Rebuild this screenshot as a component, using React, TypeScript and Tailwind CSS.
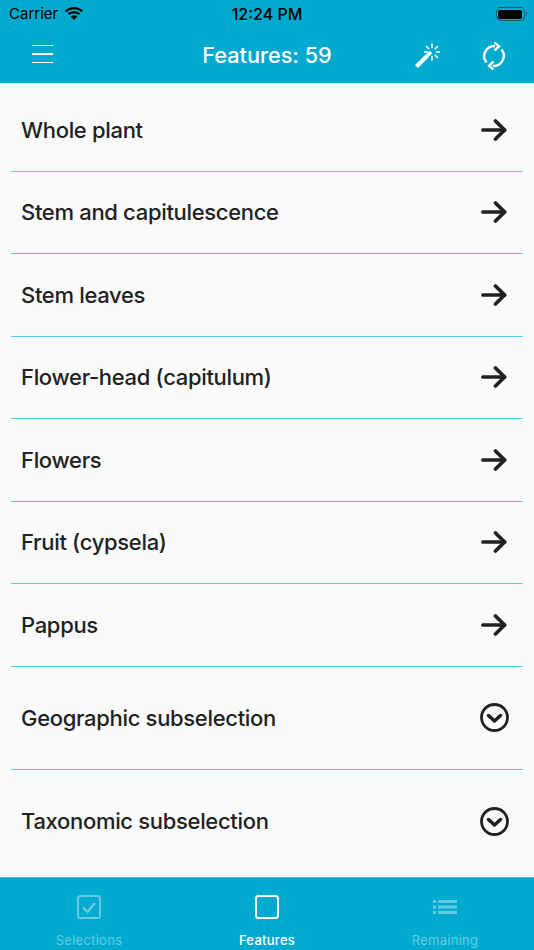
import React from 'react';

const features = [
  'Whole plant',
  'Stem and capitulescence',
  'Stem leaves',
  'Flower-head (capitulum)',
  'Flowers',
  'Fruit (cypsela)',
  'Pappus',
];

const subselections = ['Geographic subselection', 'Taxonomic subselection'];

function Wifi() {
  return (
    <svg width="20" height="15" viewBox="0 0 20 15" fill="currentColor">
      <path d="M10 2.2c2.9 0 5.5 1.1 7.5 3L19 3.600C16.600 1.300 13.400 0 10 0S3.400 1.300 1 3.600l1.500 1.600c2-1.900 4.600-3 7.500-3z" />
      <path d="M10 6.300c1.800 0 3.400.7 4.600 1.800l1.500-1.600C14.500 5 12.300 4.100 10 4.100S5.500 5 3.900 6.500l1.500 1.600c1.200-1.100 2.800-1.800 4.600-1.800z" />
      <path d="M10 8.300c-1.200 0-2.300.5-3.200 1.200L10 13l3.200-3.500c-.9-.7-2-1.200-3.200-1.200z" />
    </svg>
  );
}

function Battery() {
  return (
    <div className="flex items-center gap-px">
      <div className="w-[29px] h-[14px] rounded-[4px] border border-[#00000066] p-[1.5px]">
        <div className="w-full h-full rounded-[2px] bg-black" />
      </div>
      <div className="w-[1.5px] h-[4px] bg-[#00000066] rounded-r-sm" />
    </div>
  );
}

function StatusBar() {
  return (
    <div className="h-[28px] flex items-center justify-between pl-[9px] pr-[7px] text-black text-[15px] relative">
      <div className="flex items-center gap-[6px]">
        <span>Carrier</span>
        <Wifi />
      </div>
      <span className="absolute left-0 right-0 text-center text-[16px] font-medium">12:24 PM</span>
      <Battery />
    </div>
  );
}

function WandIcon() {
  return (
    <svg width="26" height="26" viewBox="0 0 26 26" fill="none" stroke="currentColor" strokeWidth="1.6" strokeLinecap="round">
      <path d="M2.500 23.500L13.500 12.500" strokeWidth="4" strokeLinecap="butt" />
      <path d="M13.500 12.500l3.500-3.500" strokeWidth="3.500" strokeLinecap="butt" />
      <path d="M18 1v3.500M18 13.500V17M22.500 9H26M10.500 9H13.500M12.500 3.500l2.200 2.200M23.500 3.500l-2.200 2.200M21.300 12.300l2.200 2.200" />
    </svg>
  );
}

function SyncIcon() {
  return (
    <svg width="28" height="28" viewBox="0 0 28 28" fill="none" stroke="currentColor" strokeWidth="2.4">
      <path d="M6.500 20.500A10 10 0 0 1 15 4.200" />
      <path d="M21.500 7.500A10 10 0 0 1 13 23.800" />
      <path d="M14.500 0.500L19 4.200L14.500 8.500" strokeLinejoin="miter" />
      <path d="M13.500 19.500L9 23.800L13.500 27.500" strokeLinejoin="miter" />
    </svg>
  );
}

function ArrowIcon() {
  return (
    <svg width="26" height="22" viewBox="0 0 26 22" fill="none" stroke="#212121" strokeWidth="3.7" strokeLinecap="round" strokeLinejoin="round">
      <path d="M1.900 11H23.600" />
      <path d="M14.500 2L23.600 11L14.500 20" />
    </svg>
  );
}

function ChevronCircleIcon() {
  return (
    <svg width="29" height="29" viewBox="0 0 29 29" fill="none" stroke="#212121">
      <circle cx="14.5" cy="14.5" r="13" strokeWidth="2.800" />
      <path d="M8.500 12.500l6 5.500 6-5.500" strokeWidth="3.400" strokeLinecap="round" strokeLinejoin="round" />
    </svg>
  );
}

function Header() {
  return (
    <div className="h-[55px] flex items-center justify-between text-white">
      <div className="w-[146px] pl-[32px]">
        <div className="w-[21px] flex flex-col gap-[7px] mb-[3px]">
          <div className="h-[1.25px] bg-white" />
          <div className="h-[1.25px] bg-white" />
          <div className="h-[1.25px] bg-white" />
        </div>
      </div>
      <h1 className="text-[21.7px] font-medium leading-none">Features: 59</h1>
      <div className="w-[146px] flex items-center justify-between pl-[26px] pr-[26px]">
        <WandIcon />
        <SyncIcon />
      </div>
    </div>
  );
}

function Row({ label, tall, last, children }: { label: string; tall?: boolean; last?: boolean; children: React.ReactNode }) {
  return (
    <div className="px-[11px]">
      <div
        className={`flex items-center justify-between pl-[10px] ${last ? '' : 'border-b border-[#55cbe6]'} ${
          tall ? 'h-[103px] pr-[14px]' : 'h-[82.5px] pr-[16px]'
        }`}
      >
        <span className="pt-px text-[22px] font-medium text-[#212121] tracking-[-0.32px]">{label}</span>
        {children}
      </div>
    </div>
  );
}

function Tab({ label, active, children }: { label: string; active?: boolean; children: React.ReactNode }) {
  return (
    <div className={`flex-1 flex flex-col items-center pt-[15px] ${active ? 'text-white' : 'text-[#66cbe2]'}`}>
      <div className="h-[27px] flex items-center">{children}</div>
      <span className={`mt-[12px] text-[13px] leading-[16px] tracking-[0.28px] ${active ? 'font-medium' : ''}`}>{label}</span>
    </div>
  );
}

export default function App() {
  return (
    <div className="w-[534px] h-[950px] flex flex-col bg-[#fafafa] font-['Inter',sans-serif] overflow-hidden">
      <div className="bg-[#00a9ce]">
        <StatusBar />
        <Header />
      </div>

      <div className="flex-1 pt-[6px]">
        {features.map((f) => (
          <Row key={f} label={f}>
            <ArrowIcon />
          </Row>
        ))}
        {subselections.map((s, i) => (
          <Row key={s} label={s} tall last={i === subselections.length - 1}>
            <ChevronCircleIcon />
          </Row>
        ))}
      </div>

      <div className="h-[73px] bg-[#00a9ce] border-t border-[#4fb8d2] flex">
        <Tab label="Selections">
          <svg width="24" height="24" viewBox="0 0 24 24" fill="none" stroke="currentColor" strokeWidth="2">
            <rect x="1" y="1" width="22" height="22" rx="2.5" />
            <path d="M6 12.500l4.500 4.500L18 8" strokeWidth="2.500" />
          </svg>
        </Tab>
        <Tab label="Features" active>
          <svg width="24" height="24" viewBox="0 0 24 24" fill="none" stroke="currentColor" strokeWidth="2">
            <rect x="1" y="1" width="22" height="22" rx="2.5" />
          </svg>
        </Tab>
        <Tab label="Remaining">
          <svg width="24" height="18" viewBox="0 0 24 18" fill="currentColor">
            <rect x="0" y="2" width="3" height="3" />
            <rect x="0" y="7.500" width="3" height="3" />
            <rect x="0" y="13" width="3" height="3" />
            <rect x="5" y="2" width="19" height="3" />
            <rect x="5" y="7.500" width="19" height="3" />
            <rect x="5" y="13" width="19" height="3" />
          </svg>
        </Tab>
      </div>
    </div>
  );
}
